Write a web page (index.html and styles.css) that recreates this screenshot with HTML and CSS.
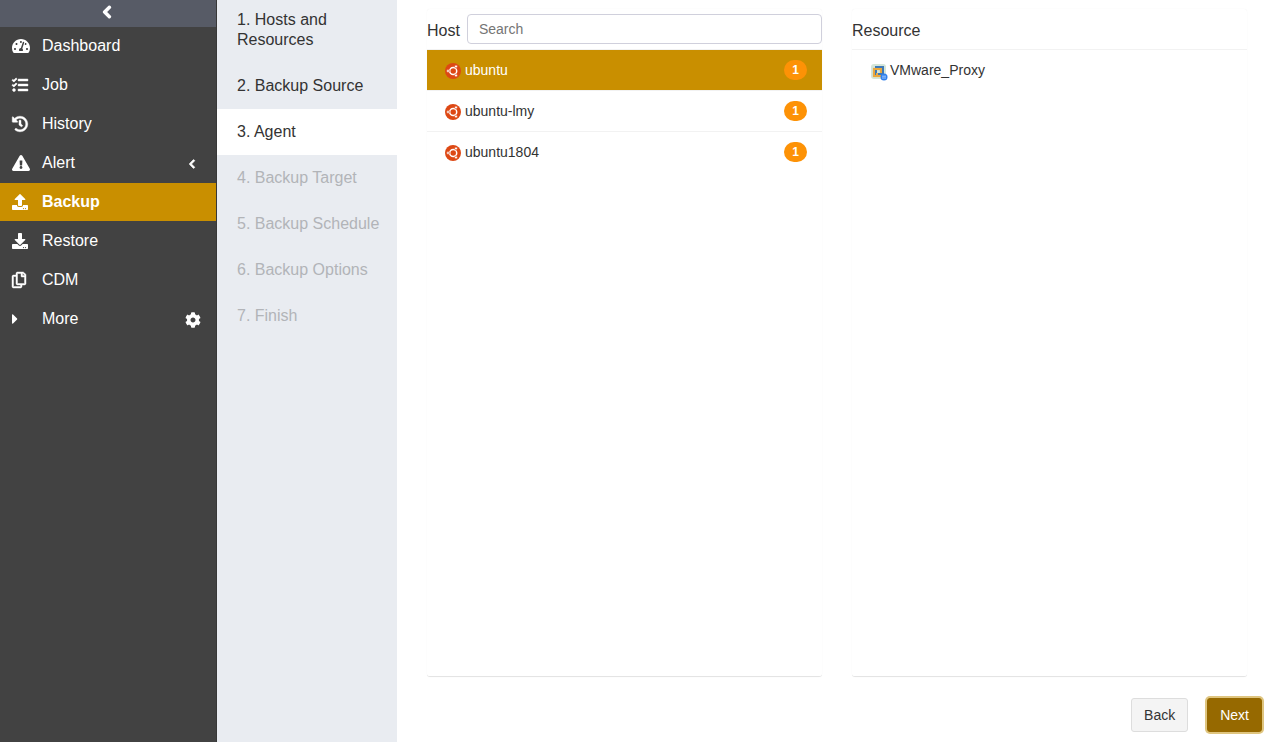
FILE: index.html
```
<!DOCTYPE html>
<html lang="en">
<head>
<meta charset="utf-8">
<title>Backup - Agent</title>
<link rel="stylesheet" href="styles.css">
</head>
<body>
<svg class="defs" aria-hidden="true">
  <symbol id="ubuntu" viewBox="0 0 16 16">
    <circle cx="8" cy="8" r="8" fill="#dd4814"/>
    <circle cx="8.200" cy="8" r="3.500" fill="none" stroke="#fff" stroke-width="1.500"/>
    <g fill="#fff" stroke="#dd4814" stroke-width=".6">
      <circle cx="3" cy="8" r="1.400"/><circle cx="11" cy="3.500" r="1.400"/><circle cx="11" cy="12.500" r="1.400"/>
    </g>
  </symbol>
</svg>
<div class="app">
  <nav class="sidebar" aria-label="Main">
    <button class="collapse" type="button" aria-label="Collapse menu"><svg class="icon-chevron" viewBox="0 0 320 512"><path d="M34.52 239.03L228.87 44.69c9.37-9.37 24.57-9.37 33.94 0l22.67 22.67c9.36 9.36 9.37 24.52.04 33.9L131.49 256l154.02 154.75c9.34 9.38 9.32 24.54-.04 33.9l-22.67 22.67c-9.37 9.37-24.57 9.37-33.94 0L34.52 272.97c-9.37-9.37-9.37-24.57 0-33.94z"/></svg></button>
    <a class="nav-item" href="#"><span class="nav-icon"><svg class="icon icon-wide" viewBox="0 0 576 512"><path d="M288 32C128.94 32 0 160.94 0 320c0 52.8 14.25 102.26 39.06 144.8 5.61 9.62 16.3 15.2 27.44 15.2h443c11.14 0 21.83-5.58 27.44-15.2C561.75 422.26 576 372.8 576 320c0-159.06-128.94-288-288-288zm0 64c14.71 0 26.58 10.13 30.32 23.65-1.11 2.26-2.64 4.23-3.45 6.67l-9.22 27.67c-5.13 3.49-10.97 6.01-17.64 6.01-17.67 0-32-14.33-32-32S270.33 96 288 96zM96 384c-17.67 0-32-14.33-32-32s14.33-32 32-32 32 14.33 32 32-14.33 32-32 32zm48-160c-17.67 0-32-14.33-32-32s14.33-32 32-32 32 14.33 32 32-14.33 32-32 32zm246.77-72.41l-61.33 184C343.13 347.33 352 364.54 352 384c0 11.72-3.38 22.55-8.88 32H232.88c-5.5-9.45-8.88-20.28-8.88-32 0-33.94 26.5-61.43 59.9-63.59l61.34-184.01c4.17-12.56 17.73-19.45 30.36-15.17 12.57 4.19 19.35 17.79 15.17 30.36zm14.66 57.2l15.52-46.55c3.47-1.29 7.13-2.23 11.05-2.23 17.67 0 32 14.33 32 32s-14.33 32-32 32c-11.38-.01-20.89-6.28-26.57-15.22zM480 384c-17.67 0-32-14.33-32-32s14.33-32 32-32 32 14.33 32 32-14.33 32-32 32z"/></svg></span><span class="nav-label">Dashboard</span></a>
    <a class="nav-item" href="#"><span class="nav-icon"><svg class="icon icon-bold" viewBox="0 0 512 512"><path d="M139.61 35.5a12 12 0 0 0-17 0L58.93 98.81l-22.7-22.12a12 12 0 0 0-17 0L3.53 92.41a12 12 0 0 0 0 17l47.59 47.4a12.78 12.78 0 0 0 17.61 0l15.59-15.62L156.52 69a12.09 12.09 0 0 0 .09-17zm0 159.19a12 12 0 0 0-17 0l-63.68 63.72-22.7-22.1a12 12 0 0 0-17 0L3.53 252a12 12 0 0 0 0 17L51 316.5a12.77 12.77 0 0 0 17.6 0l15.7-15.69 72.2-72.22a12 12 0 0 0 .09-16.9zM64 368c-26.49 0-48.59 21.5-48.59 48S37.53 464 64 464a48 48 0 0 0 0-96zm432 16H208a16 16 0 0 0-16 16v32a16 16 0 0 0 16 16h288a16 16 0 0 0 16-16v-32a16 16 0 0 0-16-16zm0-320H208a16 16 0 0 0-16 16v32a16 16 0 0 0 16 16h288a16 16 0 0 0 16-16V80a16 16 0 0 0-16-16zm0 160H208a16 16 0 0 0-16 16v32a16 16 0 0 0 16 16h288a16 16 0 0 0 16-16v-32a16 16 0 0 0-16-16z"/></svg></span><span class="nav-label">Job</span></a>
    <a class="nav-item" href="#"><span class="nav-icon"><svg class="icon icon-bold" viewBox="0 0 512 512"><path d="M504 255.531c.253 136.64-111.18 248.372-247.82 248.468-59.015.042-113.223-20.53-155.822-54.911-11.077-8.94-11.905-25.541-1.839-35.607l11.267-11.267c8.609-8.609 22.353-9.551 31.891-1.984C173.062 425.135 212.781 440 256 440c101.705 0 184-82.311 184-184 0-101.705-82.311-184-184-184-48.814 0-93.149 18.969-126.068 49.932l50.754 50.754c10.08 10.08 2.941 27.314-11.313 27.314H24c-8.837 0-16-7.163-16-16V38.627c0-14.254 17.234-21.393 27.314-11.314l49.372 49.372C129.209 34.136 189.552 8 256 8c136.81 0 247.747 110.78 248 247.531zm-180.912 78.784l9.823-12.63c8.138-10.463 6.253-25.542-4.21-33.679L288 256.349V152c0-13.255-10.745-24-24-24h-16c-13.255 0-24 10.745-24 24v135.651l65.409 50.874c10.463 8.137 25.541 6.253 33.679-4.21z"/></svg></span><span class="nav-label">History</span></a>
    <a class="nav-item" href="#"><span class="nav-icon"><svg class="icon icon-wide" viewBox="0 0 576 512"><path d="M569.517 440.013C587.975 472.007 564.806 512 527.94 512H48.054c-36.937 0-59.999-40.055-41.577-71.987L246.423 23.985c18.467-32.009 64.72-31.951 83.154 0l239.94 416.028zM288 354c-25.405 0-46 20.595-46 46s20.595 46 46 46 46-20.595 46-46-20.595-46-46-46zm-43.673-165.346l7.418 136c.347 6.364 5.609 11.346 11.982 11.346h48.546c6.373 0 11.635-4.982 11.982-11.346l7.418-136c.375-6.874-5.098-12.654-11.982-12.654h-63.383c-6.884 0-12.356 5.78-11.981 12.654z"/></svg></span><span class="nav-label">Alert</span><svg class="icon-expand" viewBox="0 0 320 512"><path d="M34.52 239.03L228.87 44.69c9.37-9.37 24.57-9.37 33.94 0l22.67 22.67c9.36 9.36 9.37 24.52.04 33.9L131.49 256l154.02 154.75c9.34 9.38 9.32 24.54-.04 33.9l-22.67 22.67c-9.37 9.37-24.57 9.37-33.94 0L34.52 272.97c-9.37-9.37-9.37-24.57 0-33.94z"/></svg></a>
    <a class="nav-item nav-item-active" href="#" aria-current="page"><span class="nav-icon"><svg class="icon" viewBox="0 0 512 512"><path d="M296 384h-80c-13.3 0-24-10.7-24-24V192h-87.7c-17.8 0-26.7-21.5-14.1-34.1L242.3 5.7c7.5-7.5 19.8-7.5 27.3 0l152.2 152.2c12.6 12.6 3.7 34.1-14.1 34.1H320v168c0 13.3-10.7 24-24 24zm216-8v112c0 13.3-10.7 24-24 24H24c-13.3 0-24-10.7-24-24V376c0-13.3 10.7-24 24-24h136v8c0 30.900 25.100 56 56 56h80c30.900 0 56-25.100 56-56v-8h136c13.300 0 24 10.700 24 24zm-124 88c0-11-9-20-20-20s-20 9-20 20 9 20 20 20 20-9 20-20zm64 0c0-11-9-20-20-20s-20 9-20 20 9 20 20 20 20-9 20-20z"/></svg></span><span class="nav-label">Backup</span></a>
    <a class="nav-item" href="#"><span class="nav-icon"><svg class="icon" viewBox="0 0 512 512"><path d="M216 0h80c13.300 0 24 10.700 24 24v168h87.700c17.800 0 26.700 21.500 14.100 34.100L269.700 378.300c-7.500 7.500-19.800 7.500-27.300 0L90.100 226.100c-12.600-12.600-3.700-34.100 14.100-34.100H192V24c0-13.300 10.700-24 24-24zm296 376v112c0 13.300-10.700 24-24 24H24c-13.300 0-24-10.700-24-24V376c0-13.300 10.700-24 24-24h146.700l49 49c20.100 20.100 52.500 20.100 72.600 0l49-49H488c13.300 0 24 10.700 24 24zm-124 88c0-11-9-20-20-20s-20 9-20 20 9 20 20 20 20-9 20-20zm64 0c0-11-9-20-20-20s-20 9-20 20 9 20 20 20 20-9 20-20z"/></svg></span><span class="nav-label">Restore</span></a>
    <a class="nav-item" href="#"><span class="nav-icon"><svg class="icon icon-narrow icon-bold" viewBox="0 0 448 512"><path d="M433.941 65.941l-51.882-51.882A48 48 0 0 0 348.118 0H176c-26.510 0-48 21.490-48 48v48H48c-26.510 0-48 21.490-48 48v320c0 26.510 21.490 48 48 48h224c26.510 0 48-21.490 48-48v-48h80c26.510 0 48-21.490 48-48V99.882a48 48 0 0 0-14.059-33.941zM266 464H54a6 6 0 0 1-6-6V150a6 6 0 0 1 6-6h74v224c0 26.510 21.490 48 48 48h96v42a6 6 0 0 1-6 6zm128-96H182a6 6 0 0 1-6-6V54a6 6 0 0 1 6-6h106v88c0 13.255 10.745 24 24 24h88v202a6 6 0 0 1-6 6zm6-256h-64V48h9.632c1.591 0 3.117.632 4.243 1.757l48.368 48.368a6 6 0 0 1 1.757 4.243V112z"/></svg></span><span class="nav-label">CDM</span></a>
    <a class="nav-item" href="#"><span class="nav-icon"><svg class="icon icon-caret" viewBox="0 0 192 512"><path d="M0 384.662V127.338c0-17.818 21.543-26.741 34.142-14.142l128.662 128.662c7.810 7.810 7.810 20.474 0 28.284L34.142 398.804C21.543 411.404 0 402.480 0 384.662z"/></svg></span><span class="nav-label">More</span><svg class="icon icon-settings" viewBox="0 0 512 512"><path d="M487.400 315.700l-42.600-24.600c4.300-23.200 4.300-47 0-70.200l42.600-24.600c4.900-2.800 7.100-8.600 5.500-14-11.100-35.600-30-67.800-54.700-94.600-3.800-4.100-10-5.100-14.800-2.300L380.800 110c-17.900-15.400-38.500-27.300-60.800-35.100V25.800c0-5.600-3.900-10.500-9.400-11.700-36.700-8.200-74.300-7.800-109.200 0-5.500 1.200-9.400 6.100-9.400 11.700V75c-22.200 7.900-42.800 19.800-60.800 35.100L88.700 85.500c-4.900-2.800-11-1.900-14.800 2.300-24.700 26.700-43.600 58.900-54.700 94.600-1.700 5.400.6 11.200 5.500 14L67.300 221c-4.300 23.200-4.300 47 0 70.200l-42.600 24.600c-4.900 2.800-7.100 8.600-5.500 14 11.100 35.600 30 67.800 54.700 94.600 3.800 4.100 10 5.100 14.800 2.300l42.600-24.600c17.900 15.400 38.500 27.300 60.800 35.100v49.200c0 5.600 3.900 10.500 9.400 11.700 36.700 8.200 74.300 7.800 109.200 0 5.500-1.200 9.400-6.100 9.400-11.700v-49.200c22.200-7.900 42.800-19.800 60.800-35.100l42.600 24.600c4.900 2.800 11 1.900 14.800-2.300 24.700-26.700 43.600-58.900 54.700-94.600 1.500-5.500-.7-11.300-5.600-14.100zM256 336c-44.100 0-80-35.900-80-80s35.900-80 80-80 80 35.900 80 80-35.900 80-80 80z"/></svg></a>
  </nav>

  <div class="steps">
    <div class="step">1. Hosts and Resources</div>
    <div class="step">2. Backup Source</div>
    <div class="step step-current" aria-current="step">3. Agent</div>
    <div class="step step-pending">4. Backup Target</div>
    <div class="step step-pending">5. Backup Schedule</div>
    <div class="step step-pending">6. Backup Options</div>
    <div class="step step-pending">7. Finish</div>
  </div>

  <main class="content">
    <div class="panels">
      <section class="panel">
        <div class="panel-head"><label class="panel-title" for="host-search">Host</label><input class="search" id="host-search" type="text" placeholder="Search"></div>
        <a class="row row-active" href="#"><svg class="row-icon"><use href="#ubuntu"/></svg><span class="row-label">ubuntu</span><span class="badge">1</span></a>
        <a class="row" href="#"><svg class="row-icon"><use href="#ubuntu"/></svg><span class="row-label">ubuntu-lmy</span><span class="badge">1</span></a>
        <a class="row" href="#"><svg class="row-icon"><use href="#ubuntu"/></svg><span class="row-label">ubuntu1804</span><span class="badge">1</span></a>
      </section>
      <section class="panel">
        <div class="panel-head"><span class="panel-title">Resource</span></div>
        <a class="row" href="#"><svg class="row-icon" viewBox="0 0 16 16"><rect x="1" y="1" width="15" height="15" rx="3" fill="#d5e6d9"/><rect x="4" y="6" width="7" height="7" fill="none" stroke="#eaa83e" stroke-width="2.200"/><rect x="6" y="4" width="7" height="7" fill="none" stroke="#3f79b5" stroke-width="2"/><path d="M4 11V6h4M8 11H6" fill="none" stroke="#eaa83e" stroke-width="2"/><circle cx="14" cy="14" r="3.500" fill="#2f80ed"/><path d="M12 13.200h4M12 15h4" stroke="#b9d6ff" stroke-width=".8"/></svg><span class="row-label">VMware_Proxy</span></a>
      </section>
    </div>
    <div class="actions">
      <button class="btn" type="button">Back</button>
      <button class="btn btn-primary" type="button">Next</button>
    </div>
  </main>
</div>
</body>
</html>
```
FILE: styles.css
```
* { box-sizing: border-box; }
body {
  margin: 0;
  font: 16px/20px "Liberation Sans", Arial, sans-serif;
  color: #333;
  background: #fff;
}
a { color: inherit; text-decoration: none; }
button, input { font-family: inherit; }
.defs { display: none; }
.app { display: flex; min-height: 100vh; }

.sidebar {
  width: 217px;
  flex: none;
  background: #424242;
  border-right: 1px solid #383838;
  color: #fff;
}
.sidebar svg { fill: currentColor; overflow: visible; }
.collapse {
  display: flex;
  align-items: center;
  justify-content: center;
  width: 100%;
  height: 27px;
  padding: 0 3px 4px 0;
  border: 0;
  background: #575b66;
  color: #fff;
}
.icon-chevron { width: 10px; height: 14px; }
.icon-chevron, .icon-expand { stroke: currentColor; stroke-width: 44px; }
.nav-item {
  display: flex;
  align-items: center;
  height: 38px;
  margin-bottom: 1px;
  padding: 0 15px 0 12px;
}
.nav-item-active { background: #c98f00; font-weight: bold; }
.nav-icon { display: flex; width: 30px; }
.nav-label { flex: 1; }
.icon { width: 16px; height: 16px; }
.icon-bold { stroke: currentColor; stroke-width: 14px; }
.icon-wide { width: 18px; }
.icon-narrow { width: 14px; }
.icon-caret { width: 6px; }
.icon-expand { width: 8px; height: 10px; margin: 2px 5px 0 0; }
.icon-settings { margin-top: 2px; }

.steps {
  width: 180px;
  flex: none;
  background: #e9ecf1;
}
.step { padding: 13px 15px 13px 20px; }
.step:first-child { padding-top: 10px; }
.step-current { background: #fff; }
.step-pending { color: #b2b4b8; }

.content {
  flex: 1;
  min-width: 0;
  display: flex;
  flex-direction: column;
}
.panels {
  flex: 1;
  display: grid;
  grid-template-columns: 1fr 1fr;
  gap: 30px;
  padding: 9px 26px 0 30px;
}
.panel {
  border-bottom: 1px solid #e4e4e4;
  border-radius: 3px;
  box-shadow: 0 0 1px #ececec;
}
.panel-head {
  display: flex;
  align-items: center;
  gap: 7px;
  height: 41px;
  border-bottom: 1px solid #f2f2f2;
}
.panel-title { padding-top: 3px; }
.search {
  flex: 1;
  min-width: 0;
  height: 30px;
  padding: 0 11px;
  border: 1px solid #d0d0dc;
  border-radius: 4px;
  font-size: 14px;
}
.search::placeholder { color: #757575; }
.row {
  display: flex;
  align-items: center;
  height: 41px;
  padding: 0 15px 0 18px;
  border-bottom: 1px solid #f2f2f2;
  font-size: 14px;
}
.row:last-child { border-bottom-color: transparent; }
.row-active { background: #c98f00; background-clip: padding-box; color: #fff; }
.row-icon { width: 16px; height: 16px; margin: 2px 4px 0 0; overflow: visible; }
.row-label { flex: 1; }
.badge {
  padding: 0 8px;
  border-radius: 10px;
  background: #fd9206;
  color: #fff;
  font-size: 12px;
  font-weight: bold;
}

.actions {
  display: flex;
  justify-content: flex-end;
  gap: 19px;
  padding: 21px 11px 10px;
}
.btn {
  height: 34px;
  padding: 0 12px;
  border: 1px solid #ddd;
  border-radius: 3px;
  background: #f4f4f4;
  color: #333;
  font-size: 14px;
}
.btn-primary {
  border-color: #966900;
  background: #966900;
  color: #fff;
  box-shadow: 0 0 0 2px #dfc57f;
}
```
